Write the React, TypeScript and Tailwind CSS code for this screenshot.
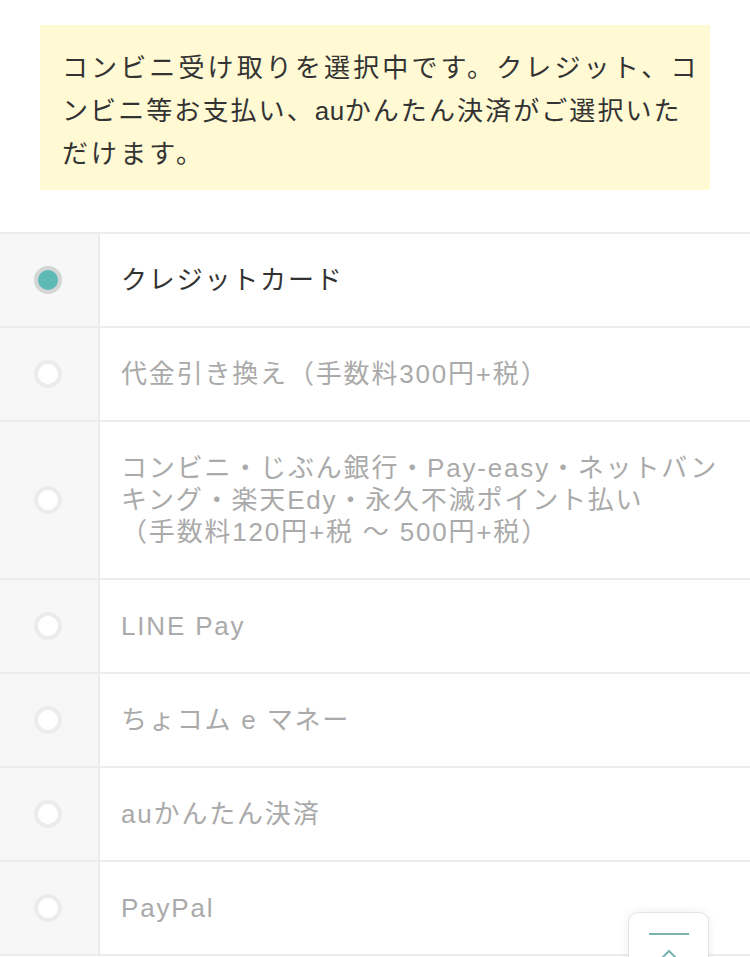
import React from "react";

const font = {
  fontFamily: '"Liberation Sans", "Noto Sans CJK JP", sans-serif',
};

const methods: { label: React.ReactNode; key: string; selected?: boolean }[] = [
  { key: "card", label: "クレジットカード", selected: true },
  { key: "cod", label: "代金引き換え（手数料300円+税）" },
  {
    key: "cvs",
    label: (
      <>
        コンビニ・じぶん銀行・Pay-easy・ネットバンキング・楽天Edy・永久不滅ポイント払い
        <br />
        （手数料120円+税 〜 500円+税）
      </>
    ),
  },
  { key: "line", label: "LINE Pay" },
  { key: "chocom", label: "ちょコム e マネー" },
  { key: "au", label: "auかんたん決済" },
  { key: "paypal", label: "PayPal" },
];

function Radio({ checked }: { checked?: boolean }) {
  return checked ? (
    <span className="block h-[28px] w-[28px] rounded-full border-[4px] border-[#d4d6d6] bg-[#5dbab4]" />
  ) : (
    <span className="block h-[28px] w-[28px] rounded-full border-[4px] border-[#ececec] bg-white" />
  );
}

export default function App() {
  return (
    <div className="relative min-h-[957px] overflow-hidden bg-white" style={font}>
      <div className="px-[40px] pt-[25px]">
        <p className="whitespace-nowrap bg-[#fffad4] pb-[14px] pl-[22px] pt-[22px] text-[26px] leading-[43px] tracking-[0.12em] text-[#333]">
          コンビニ受け取りを選択中です。クレジット、コ
          <br />
          <span className="tracking-[0.08em]">
            ンビニ等お支払い、<span className="tracking-[0.02em]">au</span>かんたん決済がご選択いた
          </span>
          <br />
          だけます。
        </p>
      </div>

      <ul className="mt-[42px] border-t-2 border-[#ececec]">
        {methods.map((m) => (
          <li key={m.key} className="flex border-b-2 border-[#ececec]">
            <div className="flex w-[100px] shrink-0 items-center justify-center border-r-2 border-[#ececec] bg-[#f7f7f7] pr-[2px]">
              <Radio checked={m.selected} />
            </div>
            <div
              className={
                "flex-1 py-[30px] pl-[21px] pr-[16px] text-[26px] leading-[32px] tracking-[0.07em] " +
                (m.selected ? "text-[#333]" : "text-[#aaa]")
              }
            >
              {m.label}
            </div>
          </li>
        ))}
      </ul>

      <button className="absolute left-[628px] top-[912px] h-[70px] w-[81px] rounded-t-[10px] border border-[#e4e4e4] bg-white shadow-[0_0_8px_rgba(0,0,0,0.08)]">
        <span className="absolute left-[20px] top-[20px] block h-[2px] w-[40px] bg-[#78b3b1]" />
        <svg
          className="absolute left-[31px] top-[35px]"
          width="18"
          height="12"
          viewBox="0 0 18 12"
          fill="none"
        >
          <path d="M2 10 L9 3 L16 10" stroke="#78b3b1" strokeWidth="2" />
        </svg>
      </button>
    </div>
  );
}
